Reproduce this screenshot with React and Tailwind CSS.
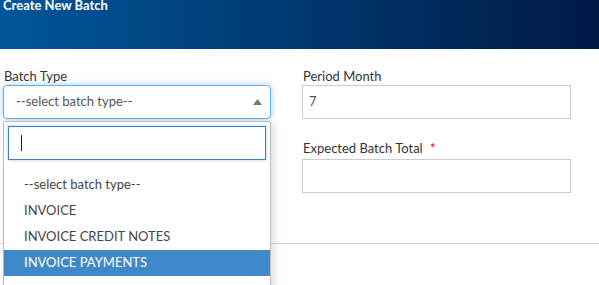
import React from "react";

export default function App() {
  const options = ["--select batch type--", "INVOICE", "INVOICE CREDIT NOTES", "INVOICE PAYMENTS"];
  return (
    <div className="w-[599px] h-[285px] overflow-hidden bg-white relative" style={{ fontFamily: "Lato, 'Open Sans', sans-serif" }}>
      <div className="h-[50px] bg-[linear-gradient(to_right,#00579b,#00386f_50%,#001a46)] px-[3px]">
        <div className="text-white text-[13px] font-bold leading-[13px] -mt-[1px]">Create New Batch</div>
      </div>
      <div className="grid grid-cols-[268px_269px] gap-x-[31px] pl-[3px] pt-[19px]">
        <div className="relative">
          <div className="text-[13px] text-[#333] leading-[16px] pl-[1px]">Batch Type</div>
          <div className="mt-[1px] h-[34px] rounded-[4px] border border-[#66afe9] shadow-[0_0_6px_rgba(102,175,233,0.6)] flex items-center justify-between pl-[12px] pr-[8px] text-[13px] text-[#555]">
            <span>--select batch type--</span>
            <svg width="9" height="6" viewBox="0 0 9 6"><path d="M0 6 L4.5 0 L9 6 Z" fill="#777" /></svg>
          </div>
          <div className="mt-[39px] h-[32px] border border-[#ccc] rounded-[2px]"></div>
          <div className="absolute left-0 top-[53px] w-[268px] h-[180px] bg-white border border-[#bbb] shadow-[4px_2px_8px_rgba(0,0,0,0.12)] rounded-t-[2px]">
            <div className="px-[4px] pt-[4px]">
              <div className="h-[34px] border border-[#3c7fc4] shadow-[0_0_3px_rgba(60,127,196,0.4)] flex items-center pl-[12px]">
                <div className="w-[1px] h-[16px] bg-[#222]"></div>
              </div>
            </div>
            <div className="mt-[12px]">
              {options.map((o, i) => (
                <div
                  key={o}
                  className={
                    "h-[26px] flex items-center pl-[20px] text-[13px] " +
                    (i === 3 ? "bg-[#4089c9] text-white" : "text-[#444]")
                  }
                >
                  {o}
                </div>
              ))}
            </div>
          </div>
        </div>
        <div>
          <div className="text-[13px] text-[#333] leading-[16px] pl-[1px]">Period Month</div>
          <div className="mt-[1px] h-[34px] border border-[#ccc] flex items-center pl-[6px] text-[13px] text-[#555]">7</div>
          <div className="mt-[21px] text-[13px] text-[#333] leading-[16px] pl-[1px]">
            Expected Batch Total <span className="text-[#e00] ml-[4px]">*</span>
          </div>
          <div className="mt-[3px] h-[34px] border border-[#ccc]"></div>
        </div>
      </div>
      <div className="mt-[50px] h-[1px] bg-[#d2d0de]"></div>
    </div>
  );
}
